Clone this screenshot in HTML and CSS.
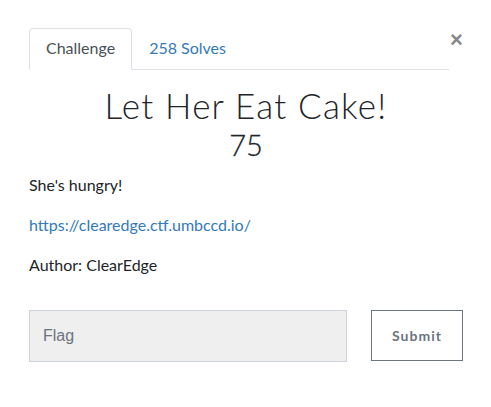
FILE: index.html
```html
<!DOCTYPE html>
<html>
<head>
<meta charset="utf-8">
<link rel="stylesheet" href="styles.css">
</head>
<body>
<div class="modal">
  <div class="tabs-row">
    <ul class="tabs">
      <li class="tab active">Challenge</li>
      <li class="tab">258 Solves</li>
    </ul>
    <span class="close">&times;</span>
  </div>
  <h2 class="title">Let Her Eat Cake!</h2>
  <h3 class="points">75</h3>
  <div class="desc">
    <p>She's hungry!</p>
    <p><a href="#">https://clearedge.ctf.umbccd.io/</a></p>
    <p>Author: ClearEdge</p>
  </div>
  <div class="submit-row">
    <input class="flag" type="text" placeholder="Flag">
    <button class="submit">Submit</button>
  </div>
</div>
</body>
</html>
```
FILE: styles.css
```css
html, body { margin: 0; padding: 0; background: #fff; }
body { font-family: Lato, "Noto Sans", sans-serif; color: #212529; font-size: 16px; }
.modal { padding: 28px 28px 0 29px; width: 434px; }
.tabs-row { display: flex; align-items: flex-start; }
.tabs { list-style: none; margin: 0; padding: 0; display: flex; width: 420px; border-bottom: 1px solid #dee2e6; }
.tab { padding: 0 16px; height: 40px; line-height: 38px; color: #337ab7; font-size: 16px; border: 1px solid transparent; border-bottom: none; margin-bottom: -1px; }
.tab.active { color: #495057; border-color: #dee2e6; border-radius: 4px 4px 0 0; background: #fff; height: 41px; }
.close { font-family: "Liberation Sans", sans-serif; font-size: 22px; font-weight: bold; color: #888; line-height: 1; margin: 1px 0 0 1px; }
.title { font-family: Lato, sans-serif; font-weight: 300; font-size: 35px; text-align: center; margin: 13px 0 0; line-height: 44px; letter-spacing: 1.2px; color: #212529; }
.points { font-family: Lato, sans-serif; font-weight: 300; font-size: 29px; text-align: center; margin: 0; line-height: 36px; color: #212529; -webkit-text-stroke: 0.3px #212529; }
.desc { margin-top: 10px; }
.desc p { margin: 0 0 16px; line-height: 24px; }
.desc a { color: #337ab7; text-decoration: none; }
.submit-row { display: flex; gap: 24px; margin-top: 33px; align-items: flex-start; }
.flag { box-sizing: border-box; width: 318px; height: 52px; background: #efefef; border: 1px solid #ced4da; padding: 0 13px; font-family: "Liberation Sans", sans-serif; font-size: 16px; color: #495057; }
.flag::placeholder { color: #6c757d; }
.submit { box-sizing: border-box; width: 92px; height: 51px; background: #fff; border: 1px solid #6c757d; font-family: Lato, sans-serif; font-weight: bold; font-size: 14px; letter-spacing: 1px; color: #6c757d; }
```
